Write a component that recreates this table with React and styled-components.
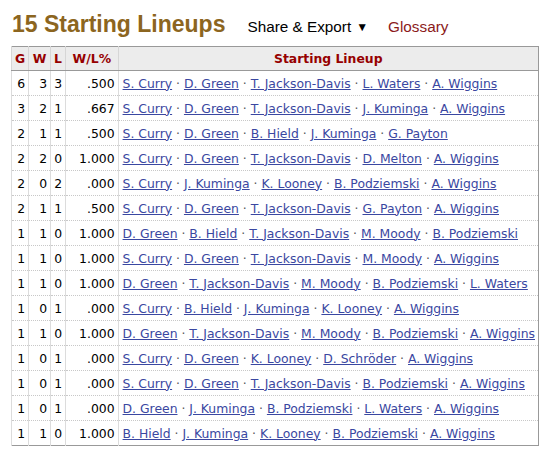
import React from "react";
import styled, { createGlobalStyle } from "styled-components";

const Global = createGlobalStyle`
  html, body { margin: 0; padding: 0; background: #fff; }
  body { font-family: "DejaVu Sans", Verdana, sans-serif; }
`;

const Page = styled.div`
  padding: 12px 0 0 11px;
`;

const TitleBar = styled.div`
  display: flex;
  align-items: baseline;
  height: 34px;
  padding-left: 1px;
`;

const Title = styled.h2`
  margin: 0;
  font-family: "Liberation Sans", Arial, sans-serif;
  font-weight: bold;
  font-size: 23px;
  line-height: 24px;
  color: #8c6520;
`;

const MenuItem = styled.span`
  font-family: "Liberation Sans", Arial, sans-serif;
  font-size: 15.3px;
  color: ${(p) => p.$color || "#000"};
  margin-left: ${(p) => p.$gap}px;
`;

const Caret = styled.span`
  font-size: 12px;
  margin-left: 5px;
  position: relative;
  top: -1px;
`;

const Table = styled.table`
  border-collapse: collapse;
  width: 528px;
  border: 1px solid #999;
  font-size: 12.4px;
  color: #000;
`;

const Th = styled.th`
  background: #ececec;
  color: #960000;
  font-weight: bold;
  height: 24px;
  padding: 0 3px;
  text-align: center;
  border-bottom: 1px solid #999;
  border-left: 1px solid #d6d6d6;
  width: ${(p) => (p.$w ? p.$w + "px" : "auto")};
  box-sizing: border-box;
  white-space: nowrap;
`;

const Td = styled.td`
  height: 24px;
  padding: 0 3px 0 ${(p) => (p.$left ? "4px" : "3px")};
  text-align: ${(p) => (p.$left ? "left" : "right")};
  border-left: 1px solid #dcdcdc;
  border-top: 1px dotted #c8c8c8;
  white-space: nowrap;
`;

const Link = styled.a`
  color: #3a47a1;
  text-decoration: underline;
`;

const Sep = styled.span`
  color: #555;
`;

const rows = [
  [6, 3, 3, ".500", "S. Curry|D. Green|T. Jackson-Davis|L. Waters|A. Wiggins"],
  [3, 2, 1, ".667", "S. Curry|D. Green|T. Jackson-Davis|J. Kuminga|A. Wiggins"],
  [2, 1, 1, ".500", "S. Curry|D. Green|B. Hield|J. Kuminga|G. Payton"],
  [2, 2, 0, "1.000", "S. Curry|D. Green|T. Jackson-Davis|D. Melton|A. Wiggins"],
  [2, 0, 2, ".000", "S. Curry|J. Kuminga|K. Looney|B. Podziemski|A. Wiggins"],
  [2, 1, 1, ".500", "S. Curry|D. Green|T. Jackson-Davis|G. Payton|A. Wiggins"],
  [1, 1, 0, "1.000", "D. Green|B. Hield|T. Jackson-Davis|M. Moody|B. Podziemski"],
  [1, 1, 0, "1.000", "S. Curry|D. Green|T. Jackson-Davis|M. Moody|A. Wiggins"],
  [1, 1, 0, "1.000", "D. Green|T. Jackson-Davis|M. Moody|B. Podziemski|L. Waters"],
  [1, 0, 1, ".000", "S. Curry|B. Hield|J. Kuminga|K. Looney|A. Wiggins"],
  [1, 1, 0, "1.000", "D. Green|T. Jackson-Davis|M. Moody|B. Podziemski|A. Wiggins"],
  [1, 0, 1, ".000", "S. Curry|D. Green|K. Looney|D. Schröder|A. Wiggins"],
  [1, 0, 1, ".000", "S. Curry|D. Green|T. Jackson-Davis|B. Podziemski|A. Wiggins"],
  [1, 0, 1, ".000", "D. Green|J. Kuminga|B. Podziemski|L. Waters|A. Wiggins"],
  [1, 1, 0, "1.000", "B. Hield|J. Kuminga|K. Looney|B. Podziemski|A. Wiggins"],
];

function Lineup({ text }) {
  const names = text.split("|");
  return names.map((n, i) => (
    <React.Fragment key={i}>
      {i > 0 && <Sep> · </Sep>}
      <Link href="#">{n}</Link>
    </React.Fragment>
  ));
}

export default function App() {
  return (
    <Page>
      <Global />
      <TitleBar>
        <Title>15 Starting Lineups</Title>
        <MenuItem $gap={22}>
          Share &amp; Export<Caret>▼</Caret>
        </MenuItem>
        <MenuItem $gap={20} $color="#8b1a1a">Glossary</MenuItem>
      </TitleBar>
      <Table>
        <thead>
          <tr>
            <Th $w={17}>G</Th>
            <Th $w={22}>W</Th>
            <Th $w={15}>L</Th>
            <Th $w={53}>W/L%</Th>
            <Th>Starting Lineup</Th>
          </tr>
        </thead>
        <tbody>
          {rows.map((r, i) => (
            <tr key={i}>
              <Td>{r[0]}</Td>
              <Td>{r[1]}</Td>
              <Td>{r[2]}</Td>
              <Td>{r[3]}</Td>
              <Td $left>
                <Lineup text={r[4]} />
              </Td>
            </tr>
          ))}
        </tbody>
      </Table>
    </Page>
  );
}
